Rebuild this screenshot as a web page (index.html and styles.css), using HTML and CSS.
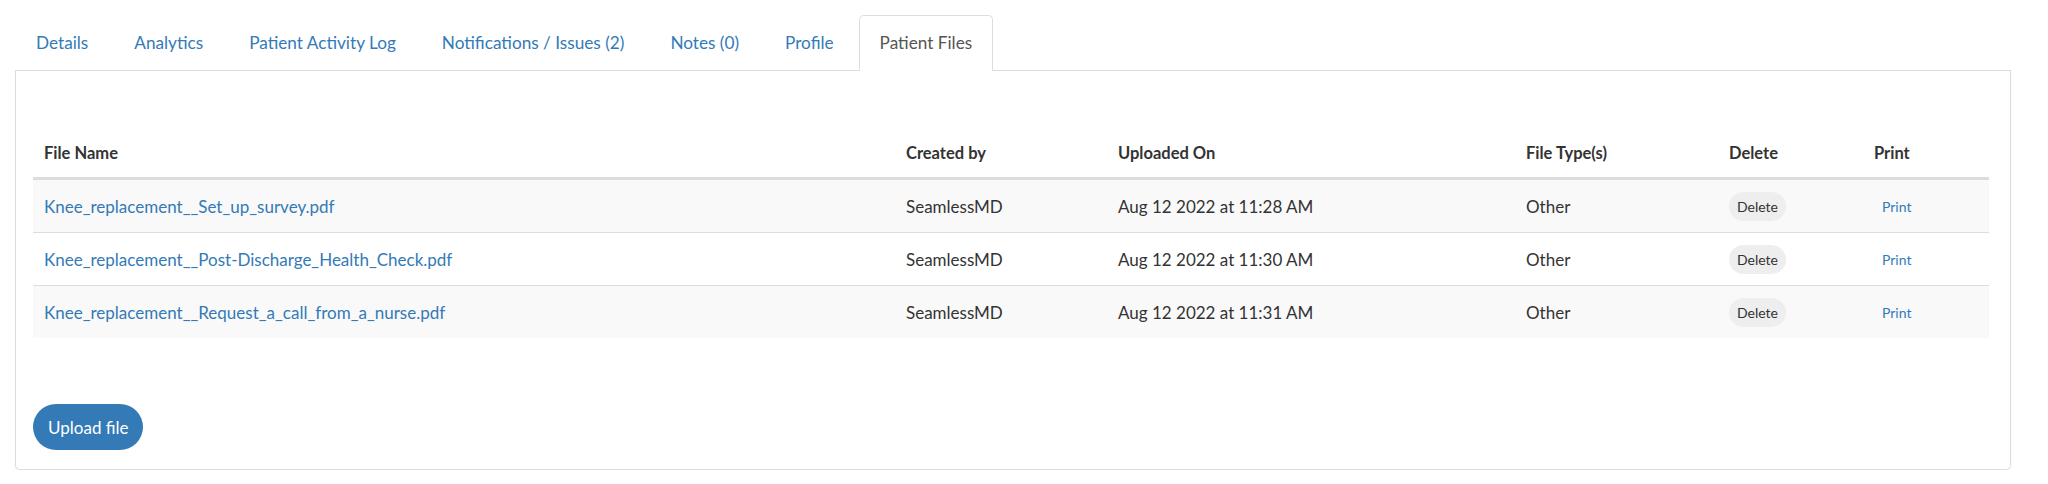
FILE: index.html
```html
<!DOCTYPE html>
<html>
    <head>
        <title>Patient Files</title>
        <link rel="stylesheet" href="styles.css">
    </head>
    <body>
        <div class="page">
            <ul class="tabs">
                <li><a href="#">Details</a></li>
                <li><a href="#">Analytics</a></li>
                <li><a href="#">Patient Activity Log</a></li>
                <li><a href="#">Notifications / Issues (2)</a></li>
                <li><a href="#">Notes (0)</a></li>
                <li><a href="#">Profile</a></li>
                <li class="active"><a href="#">Patient Files</a></li>
            </ul>
            <div class="panel">
                <table class="files">
                    <colgroup>
                        <col style="width: 862px">
                        <col style="width: 212px">
                        <col style="width: 408px">
                        <col style="width: 203px">
                        <col style="width: 145px">
                        <col style="width: 126px">
                    </colgroup>
                    <thead>
                        <tr>
                            <th>File Name</th>
                            <th>Created by</th>
                            <th>Uploaded On</th>
                            <th>File Type(s)</th>
                            <th>Delete</th>
                            <th>Print</th>
                        </tr>
                    </thead>
                    <tbody>
                        <tr>
                            <td><a href="#">Knee_replacement__Set_up_survey.pdf</a></td>
                            <td>SeamlessMD</td>
                            <td>Aug 12 2022 at 11:28 AM</td>
                            <td>Other</td>
                            <td><button class="btn-delete">Delete</button></td>
                            <td><a class="print" href="#">Print</a></td>
                        </tr>
                        <tr>
                            <td><a href="#">Knee_replacement__Post-Discharge_Health_Check.pdf</a></td>
                            <td>SeamlessMD</td>
                            <td>Aug 12 2022 at 11:30 AM</td>
                            <td>Other</td>
                            <td><button class="btn-delete">Delete</button></td>
                            <td><a class="print" href="#">Print</a></td>
                        </tr>
                        <tr>
                            <td><a href="#">Knee_replacement__Request_a_call_from_a_nurse.pdf</a></td>
                            <td>SeamlessMD</td>
                            <td>Aug 12 2022 at 11:31 AM</td>
                            <td>Other</td>
                            <td><button class="btn-delete">Delete</button></td>
                            <td><a class="print" href="#">Print</a></td>
                        </tr>
                    </tbody>
                </table>
                <button class="btn-upload">Upload file</button>
            </div>
        </div>
    </body>
</html>
```

FILE: styles.css
```css
body {
    margin: 0;
    background-color: #fff;
    font-family: "Lato", "Liberation Sans", sans-serif;
    font-size: 17px;
    color: #333;
}
a {
    color: #337ab7;
    text-decoration: none;
}
.page {
    width: 1996px;
    margin: 0 0 0 15px;
    padding-top: 15px;
}
.tabs {
    display: flex;
    margin: 0;
    padding: 0;
    list-style: none;
    border-bottom: 1px solid #ddd;
}
.tabs li {
    margin-right: 4px;
    margin-bottom: -1px;
}
.tabs a {
    display: block;
    padding: 14px 20px;
    font-size: 17.2px;
    line-height: 26px;
    border: 1px solid transparent;
    border-radius: 5px 5px 0 0;
}
.tabs .active a {
    color: #555;
    background-color: #fff;
    border-color: #ddd;
    border-bottom-color: #fff;
}
.panel {
    padding: 56px 21px 19px 17px;
    border: 1px solid #ddd;
    border-top: none;
    border-radius: 0 0 5px 5px;
    box-shadow: 0 1px 2px rgba(0, 0, 0, 0.06);
}
.files {
    width: 100%;
    table-layout: fixed;
    border-collapse: collapse;
    margin-bottom: 66px;
}
.files th {
    text-align: left;
    font-size: 16.5px;
    font-weight: 700;
    padding: 14px 11px 11px;
    line-height: 25px;
    border-bottom: 3px solid #ddd;
}
.files td {
    height: 29px;
    padding: 11px;
    line-height: 29px;
    border-top: 1px solid #ddd;
    white-space: nowrap;
}
.files thead + tbody tr:first-child td {
    border-top: none;
}
.files tbody tr:nth-child(odd) {
    background-color: #f9f9f9;
}
.btn-delete {
    display: inline-block;
    vertical-align: top;
    height: 29px;
    padding: 0 8px;
    border: none;
    border-radius: 15px;
    background-color: #eee;
    color: #333;
    font-family: inherit;
    font-size: 14px;
    line-height: 29px;
}
.print {
    padding: 0 8px;
    font-size: 14px;
}
.btn-upload {
    display: block;
    height: 46px;
    padding: 0 15px;
    border: none;
    border-radius: 23px;
    background-color: #337ab7;
    color: #fff;
    font-family: inherit;
    font-size: 17px;
}
```
